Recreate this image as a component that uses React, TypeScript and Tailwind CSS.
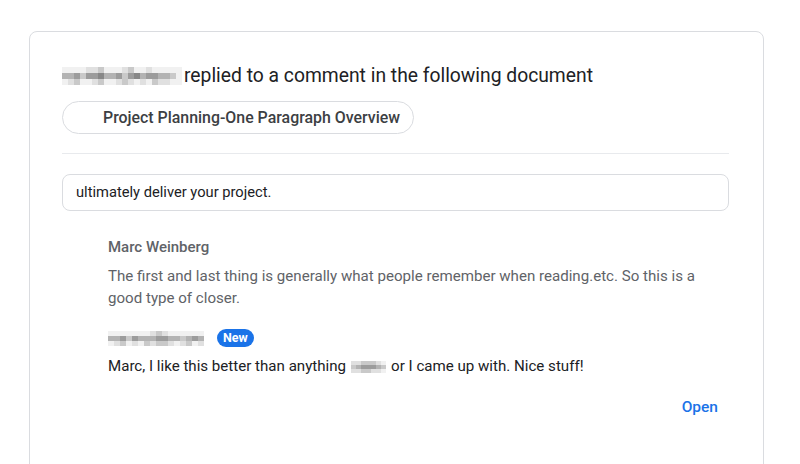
import React from "react";

const shades = [
  "bg-[#f1f1f1]",
  "bg-[#e0e0e0]",
  "bg-[#c9c9c9]",
  "bg-[#b3b3b3]",
  "bg-[#9c9c9c]",
  "bg-[#878787]",
];

function Mosaic({ rows, cell }: { rows: string[]; cell: string }) {
  return (
    <span className="inline-flex flex-col align-middle">
      {rows.map((r, i) => (
        <span key={i} className="flex">
          {r.split("").map((c, j) => (
            <span key={j} className={`${cell} ${shades[Number(c)]}`} />
          ))}
        </span>
      ))}
    </span>
  );
}

export default function App() {
  return (
    <div className="w-[800px] h-[464px] overflow-hidden bg-white" style={{ fontFamily: "Roboto, 'Open Sans', Arial, sans-serif" }}>
      <div className="ml-[29px] mt-[31px] w-[735px] h-[470px] rounded-[8px] border border-[#dadce0] pl-[32px] pr-[34px] pt-[32px]">
        <div className="flex items-center text-[19.3px] leading-[24px] text-[#202124]">
          <Mosaic
            cell="w-[6px] h-[6px]"
            rows={[
              "00001120001200100000",
              "33424453342453443320",
              "01200120012101021100",
            ]}
          />
          <span className="ml-[2px]">replied to a comment in the following document</span>
        </div>
        <div className="mt-[13px] inline-flex h-[33px] items-center rounded-full border border-[#dadce0] pl-[40px] pr-[13px] text-[15.9px] font-medium text-[#3c4043]">
          Project Planning-One Paragraph Overview
        </div>
        <div className="mt-[19px] h-px bg-[#e8eaed]" />
        <div className="mt-[20px] flex h-[37px] items-center rounded-[8px] border border-[#dadce0] px-[13px] text-[14.7px] text-[#202124]">
          ultimately deliver your project.
        </div>
        <div className="pl-[46px]">
          <div className="mt-[26px] text-[15px] font-medium leading-[20px] text-[#5f6368]">Marc Weinberg</div>
          <div className="mt-[8px] text-[15.1px] leading-[22px] text-[#5f6368]">
            The first and last thing is generally what people remember when reading.etc. So this is a
            <br />
            good type of closer.
          </div>
          <div className="mt-[20px] flex items-center gap-[13px]">
            <Mosaic
              cell="w-[6px] h-[5px]"
              rows={[
                "0000000121000000",
                "3342433344332343",
                "0120102122101201",
              ]}
            />
            <span className="inline-flex h-[18px] items-center rounded-full bg-[#1a73e8] px-[6px] text-[12.5px] font-bold text-white">
              New
            </span>
          </div>
          <div className="mt-[8px] flex items-center text-[15.1px] leading-[22px] text-[#202124]">
            <span>Marc, I like this better than anything</span>
            <span className="mx-[5px]">
              <Mosaic cell="w-[5px] h-[4px]" rows={["1122210", "2344432", "1122110"]} />
            </span>
            <span>or I came up with. Nice stuff!</span>
          </div>
        </div>
        <div className="mt-[20px] flex justify-end pr-[11px]">
          <span className="text-[15.5px] font-medium leading-[20px] text-[#1a73e8]">Open</span>
        </div>
      </div>
    </div>
  );
}
